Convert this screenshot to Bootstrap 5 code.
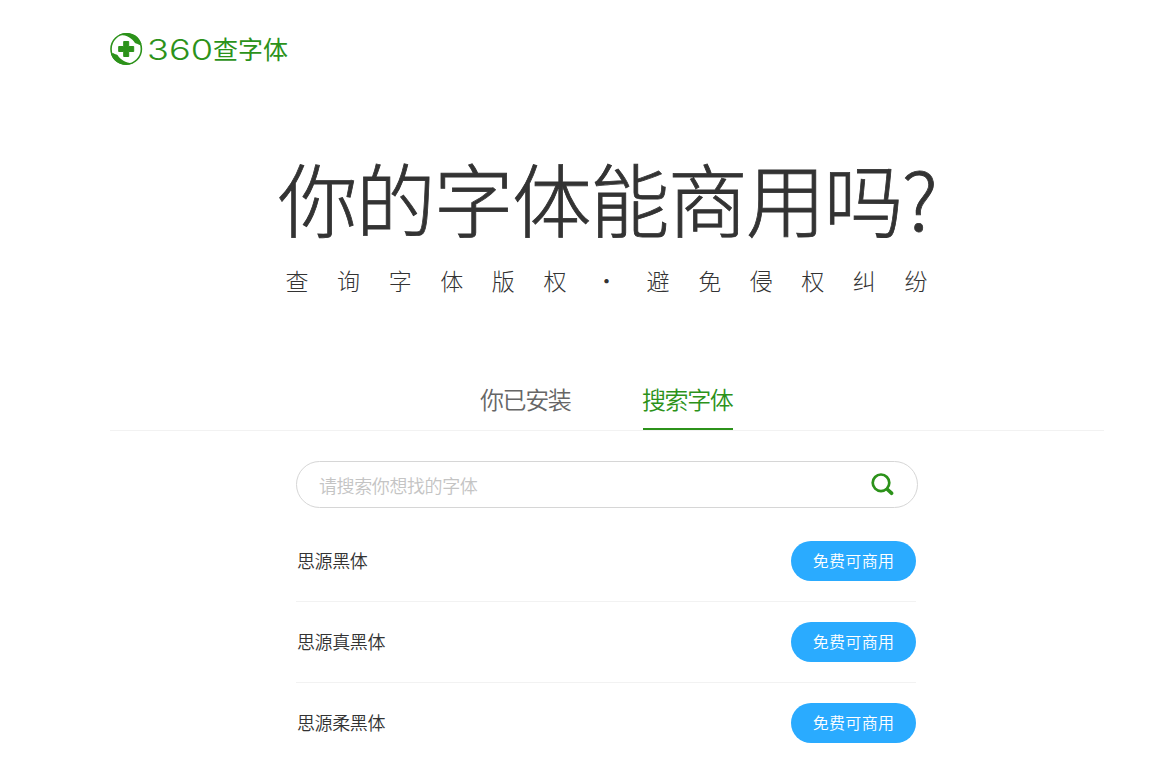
<!DOCTYPE html>
<html lang="zh-CN">
<head>
  <meta charset="utf-8">
  <meta name="viewport" content="width=device-width, initial-scale=1">
  <title>360查字体</title>
  <link href="https://cdn.jsdelivr.net/npm/bootstrap@5.3.3/dist/css/bootstrap.min.css" rel="stylesheet">
  <style>
    body {
      font-family: "Noto Sans CJK SC", sans-serif;
      font-weight: 350;
      color: #333;
      overflow: hidden;
    }

    .page {
      width: 994px;
      margin-left: 110px;
    }

    .site-header {
      height: 98px;
    }

    .logo {
      color: #2c921a;
      line-height: 32px;
    }

    .logo-num {
      font-family: Inter, sans-serif;
      font-size: 29px;
      font-weight: 300;
      width: 66px;
      margin-left: 4px;
    }

    .logo-name {
      height: 34px;
      font-size: 25px;
      font-weight: 400;
    }

    .headline {
      height: 98px;
      margin: 50px 0 0 168px;
      font-size: 79.5px;
      font-weight: 300;
      line-height: 98px;
      letter-spacing: -1.5px;
      -webkit-text-stroke: 0.8px #333;
    }

    .slogan {
      width: 643px;
      height: 34px;
      margin: 18px 0 0 175px;
      font-size: 23px;
      font-weight: 300;
      line-height: 33px;
      color: #333;
    }

    .slogan span {
      width: 24px;
    }

    .tabs {
      height: 61px;
      margin-top: 72px;
      gap: 72px;
      border-bottom: 1px solid #f2f2f2;
    }

    .tabs a {
      width: 90px;
      height: 60px;
      font-size: 24px;
      line-height: 58px;
      letter-spacing: -1.4px;
      text-indent: -1px;
      color: #666;
    }

    .tabs a.active {
      color: #2c921a;
      border-bottom: 2px solid #2c921a;
    }

    .search-box {
      width: 622px;
      height: 47px;
      margin: 30px 0 0 186px;
      padding: 0 23px 0 22px;
      border: 1px solid #d6d6d6;
    }

    .search-box input {
      height: 45px;
      padding: 1px 0 0;
      font-size: 18px;
      font-weight: 350;
      letter-spacing: -0.4px;
      outline: 0;
    }

    .search-box input::placeholder {
      color: #c4c4c4;
    }

    .font-list {
      width: 620px;
      margin: 13px 0 0 186px;
    }

    .font-item {
      height: 81px;
      font-size: 18px;
      letter-spacing: -0.4px;
      border-bottom: 1px solid #f2f2f2;
    }

    .font-name {
      padding: 0 0 1px 1px;
    }

    .btn-free {
      width: 125px;
      height: 40px;
      font-size: 16px;
      font-weight: 350;
      line-height: 38px;
      letter-spacing: 0.3px;
      color: #fff;
      background: #2aabff;
    }
  </style>
</head>
<body>

<div class="page">
  <!-- Logo -->
  <header class="site-header d-flex align-items-center">
    <a href="#" class="logo d-flex align-items-center text-decoration-none">
      <svg width="33" height="34" viewBox="0 0 33 34" fill="#2c921a">
        <circle cx="16.200" cy="17" r="15.200" fill="none" stroke="#2c921a" stroke-width="1.600"/>
        <path d="M9 3C17-1 28 1 31.500 12L29.500 13C27.500 11.500 26.500 12 25 11C22 6 16 2.500 9 3Z"/>
        <path d="M23.500 31C15 35 4 32 1 22L3 21C5 22.500 6 22 7.500 23C10.500 28 16.500 31.500 23.500 31Z"/>
        <path d="M13.700 9.500H18.700V14.500H23.700V19.500H18.700V24.500H13.700V19.500H8.700V14.500H13.700Z" stroke="#2c921a" stroke-width="1" stroke-linejoin="round"/>
      </svg>
      <svg class="logo-num" height="34" fill="#2c921a">
        <text x="0" y="28" textLength="66" lengthAdjust="spacingAndGlyphs">360</text>
      </svg>
      <span class="logo-name">查字体</span>
    </a>
  </header>

  <!-- Title -->
  <h1 class="headline text-nowrap">你的字体能商用吗?</h1>
  <p class="slogan d-flex justify-content-between text-center mb-0">
    <span>查</span><span>询</span><span>字</span><span>体</span><span>版</span><span>权</span><span>·</span><span>避</span><span>免</span><span>侵</span><span>权</span><span>纠</span><span>纷</span>
  </p>

  <!-- Tabs -->
  <nav class="tabs d-flex justify-content-center">
    <a href="#" class="text-decoration-none text-nowrap">你已安装</a>
    <a href="#" class="active text-decoration-none text-nowrap">搜索字体</a>
  </nav>

  <!-- Search -->
  <form class="search-box d-flex align-items-center rounded-pill">
    <input type="text" class="border-0 flex-grow-1 bg-transparent" placeholder="请搜索你想找的字体">
    <svg width="23" height="23" viewBox="0 0 23 23" fill="none" stroke="#2c921a">
      <circle cx="10" cy="9.800" r="8.300" stroke-width="2.700"/>
      <path d="M16.500 16.500L20.500 20.200" stroke-width="3.700" stroke-linecap="round"/>
    </svg>
  </form>

  <!-- Fonts -->
  <div class="font-list">
    <div class="font-item d-flex align-items-center justify-content-between">
      <span class="font-name">思源黑体</span>
      <a href="#" class="btn btn-free rounded-pill border-0 p-0">免费可商用</a>
    </div>
    <div class="font-item d-flex align-items-center justify-content-between">
      <span class="font-name">思源真黑体</span>
      <a href="#" class="btn btn-free rounded-pill border-0 p-0">免费可商用</a>
    </div>
    <div class="font-item d-flex align-items-center justify-content-between">
      <span class="font-name">思源柔黑体</span>
      <a href="#" class="btn btn-free rounded-pill border-0 p-0">免费可商用</a>
    </div>
  </div>
</div>

<script src="https://cdn.jsdelivr.net/npm/bootstrap@5.3.3/dist/js/bootstrap.bundle.min.js"></script>
</body>
</html>
